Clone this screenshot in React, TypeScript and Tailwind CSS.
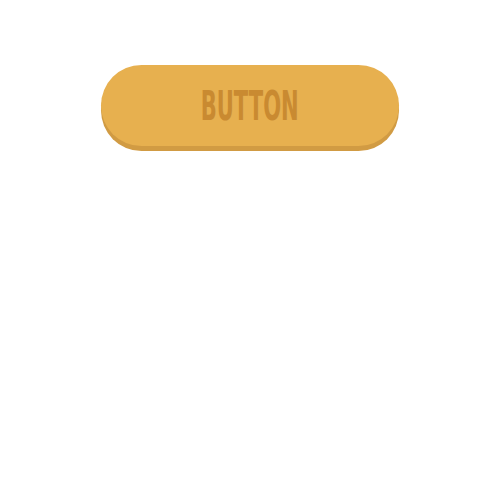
export default function App(): JSX.Element {
  return (
    <div className="w-[500px] h-[500px] bg-white flex justify-center pt-[65px]">
      <button className="w-[298px] h-[81px] rounded-full bg-[#e7b04f] shadow-[0_5px_0_#d19b43] flex items-center justify-center">
        <span className="font-['DejaVu_Sans_Condensed','DejaVu_Sans',sans-serif] font-bold text-[40px] leading-none text-[#c98a31] scale-x-[0.585] inline-block">
          BUTTON
        </span>
      </button>
    </div>
  )
}
